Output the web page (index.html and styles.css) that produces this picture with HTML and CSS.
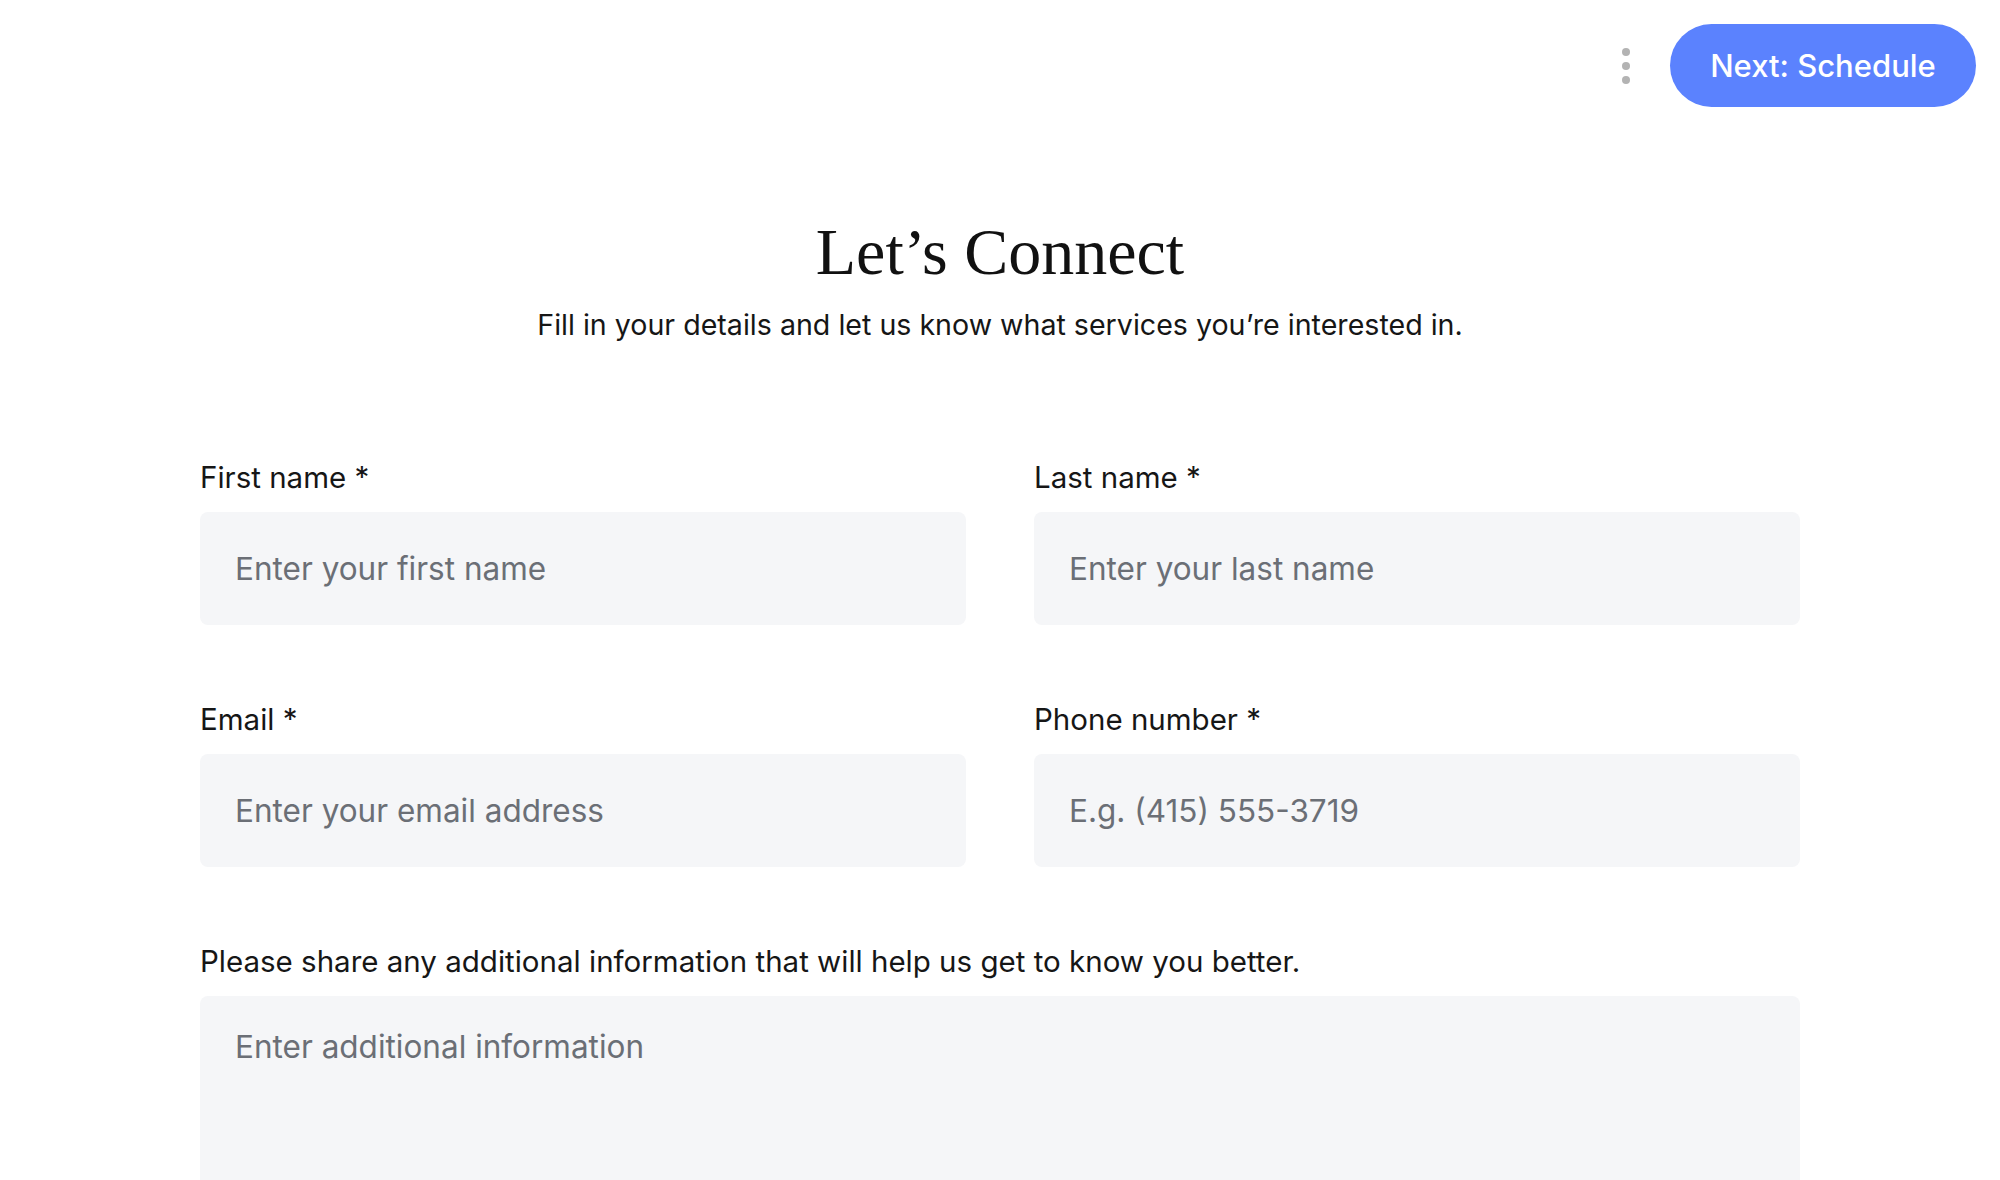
FILE: index.html
```html
<!DOCTYPE html>
<html lang="en">
<head>
<meta charset="utf-8">
<title>Let's Connect</title>
<link rel="stylesheet" href="styles.css">
</head>
<body>
<header class="topbar">
  <button class="more" aria-label="More options">
    <span class="dot"></span><span class="dot"></span><span class="dot"></span>
  </button>
  <button class="next">Next: Schedule</button>
</header>
<main class="page">
  <section class="intro">
    <h1 class="title">Let’s Connect</h1>
    <p class="subtitle">Fill in your details and let us know what services you’re interested in.</p>
  </section>
  <form class="form">
    <div class="field">
      <label class="label">First name *</label>
      <input class="input" type="text" placeholder="Enter your first name">
    </div>
    <div class="field">
      <label class="label">Last name *</label>
      <input class="input" type="text" placeholder="Enter your last name">
    </div>
    <div class="field">
      <label class="label">Email *</label>
      <input class="input" type="text" placeholder="Enter your email address">
    </div>
    <div class="field">
      <label class="label">Phone number *</label>
      <input class="input" type="text" placeholder="E.g. (415) 555-3719">
    </div>
    <div class="field wide">
      <label class="label">Please share any additional information that will help us get to know you better.</label>
      <textarea class="textarea" placeholder="Enter additional information"></textarea>
    </div>
  </form>
</main>
</body>
</html>
```
FILE: styles.css
```css
* { box-sizing: border-box; }
html, body { margin: 0; padding: 0; background: #fff; }
body {
  font-family: Inter, "Noto Sans", "Liberation Sans", sans-serif;
  color: #161616;
  overflow: hidden;
  height: 1180px;
}
.topbar {
  display: flex;
  justify-content: flex-end;
  align-items: center;
  gap: 40px;
  padding: 24px 24px 0 0;
}
.more {
  display: flex;
  flex-direction: column;
  gap: 6px;
  padding: 0;
  border: 0;
  background: none;
}
.dot {
  width: 8px;
  height: 8px;
  border-radius: 50%;
  background: #b3b3b3;
}
.next {
  width: 306px;
  height: 83px;
  border: 0;
  border-radius: 42px;
  background: #5b82fe;
  color: #fff;
  font-family: inherit;
  font-size: 31px;
  font-weight: 500;
}
.page {
  width: 1600px;
  margin: 0 auto;
}
.intro {
  text-align: center;
  padding-top: 105px;
}
.title {
  margin: 0;
  font-family: "Liberation Serif", "Times New Roman", serif;
  font-weight: 400;
  font-size: 66px;
  line-height: 80px;
  color: #111;
}
.subtitle {
  margin: 13px 0 0;
  font-size: 28.6px;
  line-height: 40px;
  color: #161616;
}
.form {
  display: grid;
  grid-template-columns: 1fr 1fr;
  column-gap: 68px;
  row-gap: 76px;
  margin-top: 114px;
}
.field { display: flex; flex-direction: column; gap: 17px; }
.wide { grid-column: 1 / -1; }
.label {
  font-size: 29.5px;
  line-height: 36px;
  color: #161616;
}
.input, .textarea {
  border: 0;
  border-radius: 8px;
  background: #f5f6f8;
  font-family: inherit;
  font-size: 31.5px;
  color: #161616;
  padding: 0 35px;
  outline: none;
}
.input { height: 113px; }
.textarea {
  height: 184px;
  padding-top: 29px;
  line-height: 44px;
  resize: none;
  border-radius: 8px 8px 0 0;
}
.input::placeholder, .textarea::placeholder { color: #6b6f76; opacity: 1; }
```
